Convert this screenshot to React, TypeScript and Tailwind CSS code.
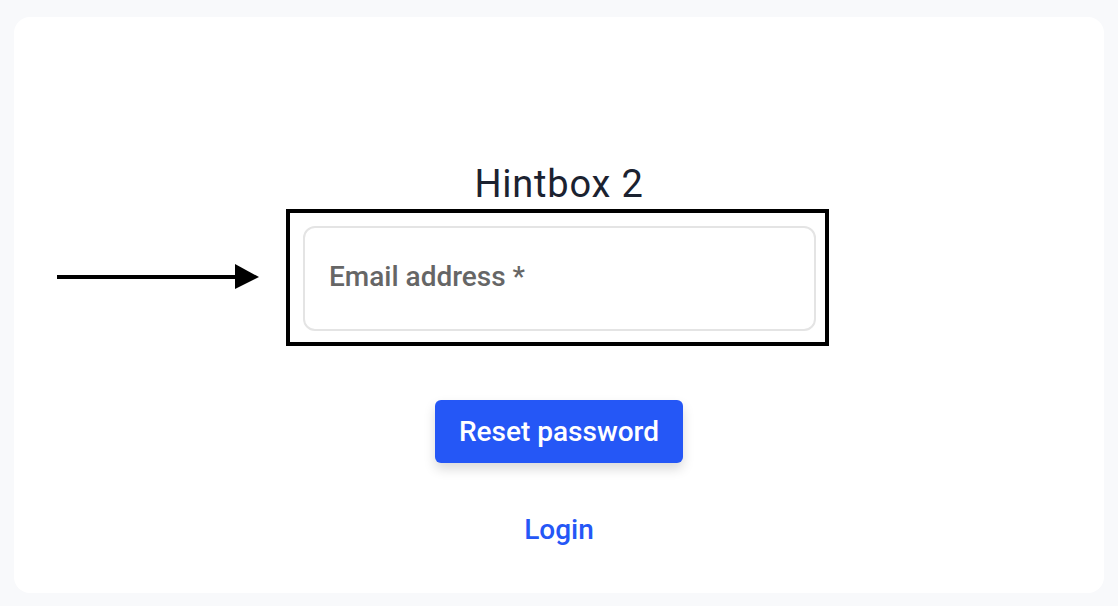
import React from "react";

export default function App() {
  return (
    <div
      className="w-[1118px] h-[606px] bg-[#f8f9fb] pl-[14px] pr-[14px] pt-[17px] pb-[13px]"
      style={{ fontFamily: "Roboto, 'Noto Sans', sans-serif" }}
    >
      <div className="relative h-full w-full bg-white rounded-[16px] flex flex-col items-center pt-[144px]">
        <h1 className="text-[38px] leading-[46px] tracking-[0.8px] font-normal text-[#1b2230]">Hintbox 2</h1>
        <div className="mt-[2px] w-[543px] h-[137px] border-[4px] border-black pl-[13px] pr-[9px] pt-[13px] pb-[11px] -ml-[3px]">
          <div className="h-full w-full rounded-[12px] border-2 border-[#e4e4e4] flex items-center pl-[24px] pb-[4px]">
            <span className="text-[28px] font-medium text-[#666666]">Email address *</span>
          </div>
        </div>
        <button className="mt-[54px] w-[248px] h-[63px] rounded-[6px] bg-[#2557f6] text-white text-[28px] font-medium shadow-[0_6px_12px_rgba(0,0,0,0.15)]">
          Reset password
        </button>
        <a className="mt-[51px] text-[28px] font-medium text-[#2557f6] leading-[32px]">Login</a>

        <svg
          className="absolute left-[43px] top-[247px]"
          width="204"
          height="26"
          viewBox="0 0 204 26"
        >
          <line x1="0" y1="13" x2="180" y2="13" stroke="black" strokeWidth="4" />
          <polygon points="178,0 202,13 178,25" fill="black" />
        </svg>
      </div>
    </div>
  );
}
